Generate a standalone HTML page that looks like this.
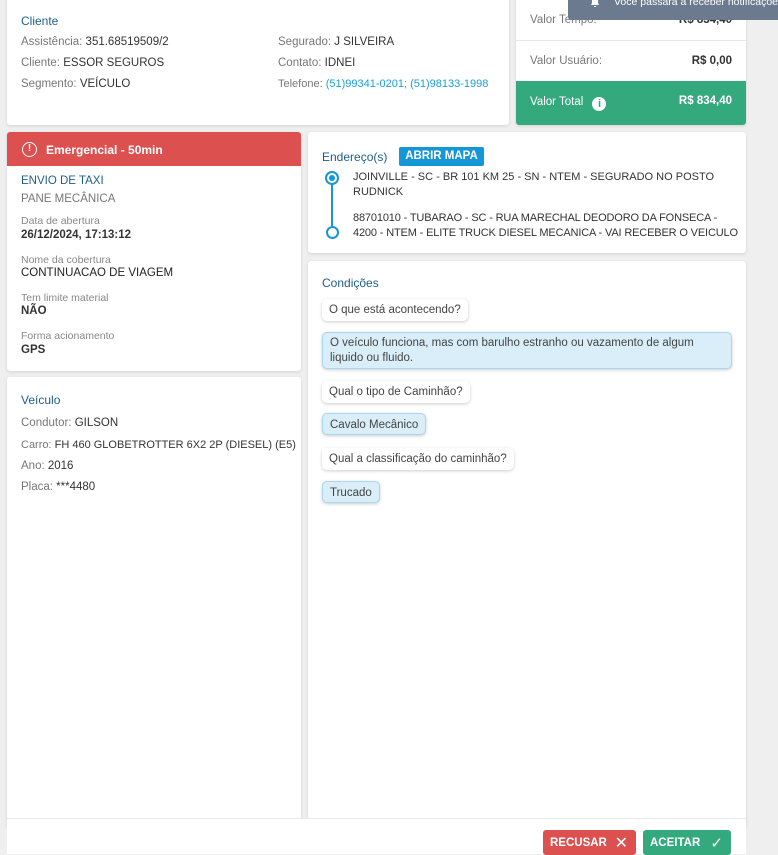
<!DOCTYPE html>
<html><head><meta charset="utf-8"><style>
*{box-sizing:border-box;margin:0;padding:0}
body{width:778px;height:854px;background:#efefef;font-family:"Liberation Sans",sans-serif;font-size:11.5px;color:#333;position:relative;overflow:hidden}
.card{position:absolute;background:#fff;border-radius:3px;box-shadow:0 1px 3px rgba(0,0,0,.12)}
.t{position:absolute;white-space:nowrap}
.g{color:#777}
.h{color:#1d5f8a;font-size:12px}
.lbl{color:#888;font-size:10.5px}
.b{font-weight:bold;color:#333}
.chip{position:absolute;left:14px;height:22px;border-radius:5px;padding:5px 7px 0;background:#fff;box-shadow:0 1px 3px rgba(0,0,0,.2);white-space:nowrap;font-size:11.5px;color:#444}
.ans{background:#d9eef8;border:1px solid #a9d7ef}
</style></head><body>
<div class="card" style="left:7px;top:-4px;width:502px;height:129px">
 <div class="t h" style="left:14px;top:18px">Cliente</div>
 <div class="t" style="left:14px;top:40px"><span class="g">Assistência:</span> 351.68519509/2</div>
 <div class="t" style="left:14px;top:61px"><span class="g">Cliente:</span> ESSOR SEGUROS</div>
 <div class="t" style="left:14px;top:82px"><span class="g">Segmento:</span> VEÍCULO</div>
 <div class="t" style="left:271px;top:40px"><span class="g">Segurado:</span> J SILVEIRA</div>
 <div class="t" style="left:271px;top:61px"><span class="g">Contato:</span> IDNEI</div>
 <div class="t" style="left:271px;top:82px;font-size:11px"><span class="g">Telefone:</span> <span style="color:#1a9fd8">(51)99341-0201; (51)98133-1998</span></div>
</div>
<div class="card" style="left:516px;top:-4px;width:230px;height:129px;overflow:hidden">
 <div class="t g" style="left:14px;top:18px">Valor Tempo:</div><div class="t b" style="right:14px;top:18px">R$ 834,40</div>
 <div style="position:absolute;left:0;right:0;top:44px;border-top:1px solid #e6e6e6"></div>
 <div class="t g" style="left:14px;top:59px">Valor Usuário:</div><div class="t b" style="right:14px;top:59px">R$ 0,00</div>
 <div style="position:absolute;left:0;right:0;top:85px;height:44px;background:#35a97e;color:#fff">
  <div class="t" style="left:14px;top:15px">Valor Total <span style="display:inline-block;width:14px;height:14px;border-radius:50%;background:#fff;color:#35a97e;font-weight:bold;font-size:11px;text-align:center;line-height:14px;margin-left:6px;vertical-align:-2px">i</span></div>
  <div class="t" style="right:14px;top:14px;font-weight:bold">R$ 834,40</div>
 </div>
</div>
<div style="position:absolute;left:568px;top:0;width:220px;height:20px;background:#6b7a8e;color:#fff;font-size:10.5px;border-radius:0 0 0 3px;overflow:hidden">
 <svg style="position:absolute;left:21px;top:-2px" width="12" height="10" viewBox="0 0 12 10"><path d="M2 7 Q3 6 3 3 Q3 -1 6 -1 Q9 -1 9 3 Q9 6 10 7 Z M5 8 h2 v1 h-2 Z" fill="#fff"/></svg>
 <div class="t" style="left:46px;top:-4px">Você passará a receber notificações</div>
</div>
<div class="card" style="left:7px;top:132px;width:294px;height:239px;overflow:hidden">
 <div style="height:34px;background:#dc5050;color:#fff;font-weight:bold;font-size:12px;position:relative">
  <span style="position:absolute;left:15px;top:10px;width:15px;height:15px;border:1.5px solid #fff;border-radius:50%;font-size:10px;text-align:center;line-height:12px">!</span>
  <span class="t" style="left:39px;top:11px">Emergencial - 50min</span></div>
 <div class="t h" style="left:14px;top:43px;font-size:11.5px">ENVIO DE TAXI</div>
 <div class="t g" style="left:14px;top:61px">PANE MECÂNICA</div>
 <div class="t lbl" style="left:14px;top:83px">Data de abertura</div>
 <div class="t b" style="left:14px;top:97px">26/12/2024, 17:13:12</div>
 <div class="t lbl" style="left:14px;top:122px">Nome da cobertura</div>
 <div class="t b" style="left:14px;top:135px;font-weight:normal;color:#222">CONTINUACAO DE VIAGEM</div>
 <div class="t lbl" style="left:14px;top:160px">Tem limite material</div>
 <div class="t b" style="left:14px;top:173px">NÃO</div>
 <div class="t lbl" style="left:14px;top:198px">Forma acionamento</div>
 <div class="t b" style="left:14px;top:212px">GPS</div>
</div>
<div class="card" style="left:7px;top:377px;width:294px;height:450px">
 <div class="t h" style="left:14px;top:16px">Veículo</div>
 <div class="t" style="left:14px;top:40px"><span class="g">Condutor:</span> GILSON</div>
 <div class="t" style="left:14px;top:62px;font-size:11px"><span class="g">Carro:</span> FH 460 GLOBETROTTER 6X2 2P (DIESEL) (E5)</div>
 <div class="t" style="left:14px;top:83px"><span class="g">Ano:</span> 2016</div>
 <div class="t" style="left:14px;top:104px"><span class="g">Placa:</span> ***4480</div>
</div>
<div class="card" style="left:308px;top:132px;width:438px;height:121px">
 <div class="t h" style="left:14px;top:18px">Endereço(s)</div>
 <div style="position:absolute;left:91px;top:15px;width:85px;height:19px;background:#1597d5;color:#fff;font-weight:bold;font-size:11.5px;border-radius:2px;text-align:center;line-height:19px">ABRIR MAPA</div>
 <div style="position:absolute;left:17px;top:39px;width:14px;height:14px;border:2px solid #1597d5;border-radius:50%"><div style="margin:2px;width:6px;height:6px;border-radius:50%;background:#1597d5"></div></div>
 <div style="position:absolute;left:23px;top:52px;width:2px;height:43px;background:#1597d5"></div>
 <div style="position:absolute;left:18px;top:94px;width:13px;height:13px;border:2px solid #1597d5;border-radius:50%"></div>
 <div style="position:absolute;left:45px;top:38px;line-height:15px;width:385px;font-size:11px">JOINVILLE - SC - BR 101 KM 25 - SN - NTEM - SEGURADO NO POSTO RUDNICK</div>
 <div style="position:absolute;left:45px;top:79px;line-height:15px;width:388px;font-size:11px;letter-spacing:-0.15px">88701010 - TUBARAO - SC - RUA MARECHAL DEODORO DA FONSECA - 4200 - NTEM - ELITE TRUCK DIESEL MECANICA - VAI RECEBER O VEICULO</div>
</div>
<div class="card" style="left:308px;top:261px;width:438px;height:566px">
 <div class="t h" style="left:14px;top:15px">Condições</div>
 <div class="chip" style="top:38px">O que está acontecendo?</div>
 <div class="chip ans" style="top:71px;width:410px;height:37px;white-space:normal;line-height:15px;padding-top:3px">O veículo funciona, mas com barulho estranho ou vazamento de algum liquido ou fluido.</div>
 <div class="chip" style="top:120px">Qual o tipo de Caminhão?</div>
 <div class="chip ans" style="top:152px">Cavalo Mecânico</div>
 <div class="chip" style="top:187px">Qual a classificação do caminhão?</div>
 <div class="chip ans" style="top:220px">Trucado</div>
</div>
<div style="position:absolute;left:7px;top:818px;width:739px;height:36px;background:#fff;border-top:1px solid #e8e8e8">
 <div style="position:absolute;left:536px;top:11px;width:93px;height:25px;background:#dc5050;color:#fff;font-weight:bold;font-size:11.5px;border-radius:3px;padding:7px 7px">RECUSAR <span style="font-weight:normal;font-size:16px;position:absolute;right:8px;top:3px">✕</span></div>
 <div style="position:absolute;left:636px;top:11px;width:88px;height:25px;background:#35a97e;color:#fff;font-weight:bold;font-size:11.5px;border-radius:3px;padding:7px 7px">ACEITAR <span style="font-weight:normal;font-size:15px;position:absolute;right:8px;top:4px">✓</span></div>
</div>
</body></html>
